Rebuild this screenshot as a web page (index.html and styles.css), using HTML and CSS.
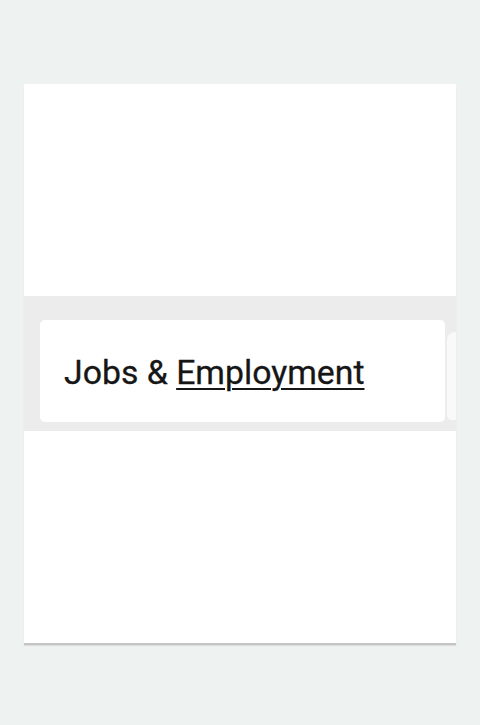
FILE: index.html
```
<!DOCTYPE html>
<html>
<head>
<meta charset="utf-8">
<link rel="stylesheet" href="styles.css">
</head>
<body>
<div class="panel">
  <div class="spacer"></div>
  <div class="band">
    <div class="card">
      <span class="title">Jobs &amp; <a class="link">Employment</a></span>
    </div>
    <div class="card next"></div>
  </div>
</div>
</body>
</html>
```
FILE: styles.css
```
html, body {
  margin: 0;
  padding: 0;
}
body {
  background: #eef2f1;
  width: 480px;
  height: 725px;
  overflow: hidden;
  padding-top: 84px;
  box-sizing: border-box;
}
.panel {
  margin: 0 24px;
  height: 559px;
  background: #ffffff;
  box-shadow: 0 2px 0 #c4c6c5, 0 3px 1px #dcdedd;
  display: flex;
  flex-direction: column;
}
.spacer {
  height: 212px;
}
.band {
  height: 135px;
  box-sizing: border-box;
  background: #ececec;
  padding: 24px 0 0 16px;
  display: flex;
  gap: 2px;
  overflow: hidden;
}
.card {
  flex: none;
  width: 405px;
  height: 102px;
  box-sizing: border-box;
  background: #ffffff;
  border-radius: 5px;
  display: flex;
  align-items: center;
  padding-left: 24px;
  padding-top: 2px;
}
.card.next {
  margin-top: 12px;
  height: 88px;
  width: 60px;
  background: #f9f9f9;
  border-radius: 8px 5px 5px 5px;
}
.title {
  font-family: Roboto, "Noto Sans", sans-serif;
  font-size: 33.8px;
  color: #161616;
  -webkit-text-stroke: 0.3px #161616;
}
.link {
  text-decoration: underline;
  text-decoration-thickness: 2px;
  text-underline-offset: 4px;
}
```
